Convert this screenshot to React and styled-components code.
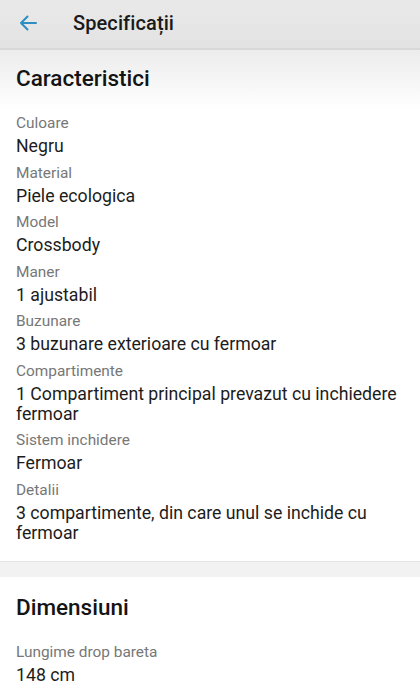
import React from "react";
import styled, { createGlobalStyle } from "styled-components";

const Global = createGlobalStyle`
  html, body { margin: 0; padding: 0; background: #ffffff; }
  body { font-family: Roboto, "Noto Sans", Arial, sans-serif; -webkit-font-smoothing: antialiased; }
  * { box-sizing: border-box; }
`;

const Page = styled.div`
  width: 420px;
  min-height: 700px;
  background: #fff;
  display: flex;
  flex-direction: column;
`;

const Header = styled.header`
  height: 50px;
  display: flex;
  align-items: center;
  background: linear-gradient(#e9e9e9, #e3e3e3);
  border-bottom: 2px solid #d8d8d8;
  padding: 0 0 2px 18px;
  gap: 35px;
`;

const BackButton = styled.button`
  border: 0;
  background: none;
  padding: 0;
  width: 20px;
  height: 20px;
  display: flex;
  align-items: center;
  justify-content: center;
  color: #2b8fc4;
`;

const Title = styled.h1`
  margin: 0;
  font-size: 20px;
  font-weight: 500;
  color: #1a1a1a;
  letter-spacing: 0.1px;
`;

const Section = styled.section`
  padding: ${(p) => (p.$first ? "14px" : "16px")} 16px 12px;
  background: ${(p) =>
    p.$first ? "linear-gradient(#ececec 0px, #ffffff 60px)" : "#ffffff"};
`;

const SectionTitle = styled.h2`
  margin: 0 0 21px;
  font-size: 22.5px;
  line-height: 28px;
  font-weight: 500;
  color: #141414;
`;

const Row = styled.div`
  display: flex;
  flex-direction: column;
  gap: 3px;
  padding-bottom: 6.5px;
`;

const Label = styled.div`
  font-size: 15.4px;
  line-height: 20px;
  color: #777777;
`;

const Value = styled.div`
  font-size: 17.7px;
  line-height: 20px;
  color: #1c1c1c;
`;

const Divider = styled.div`
  height: 16px;
  background: #f2f2f2;
  border-top: 1px solid #e4e4e4;
`;

const characteristics = [
  ["Culoare", "Negru"],
  ["Material", "Piele ecologica"],
  ["Model", "Crossbody"],
  ["Maner", "1 ajustabil"],
  ["Buzunare", "3 buzunare exterioare cu fermoar"],
  ["Compartimente", "1 Compartiment principal prevazut cu inchiedere fermoar"],
  ["Sistem inchidere", "Fermoar"],
  ["Detalii", "3 compartimente, din care unul se inchide cu fermoar"],
];

const dimensions = [["Lungime drop bareta", "148 cm"]];

function Spec({ label, value }) {
  return (
    <Row>
      <Label>{label}</Label>
      <Value>{value}</Value>
    </Row>
  );
}

export default function App() {
  return (
    <>
      <Global />
      <Page>
        <Header>
          <BackButton aria-label="Înapoi">
            <svg width="18" height="16" viewBox="0 0 18 16" fill="none">
              <path
                d="M17 8H2M8.5 1.5L2 8l6.5 6.5"
                stroke="currentColor"
                strokeWidth="2"
                strokeLinecap="round"
                strokeLinejoin="round"
              />
            </svg>
          </BackButton>
          <Title>Specificații</Title>
        </Header>
        <Section $first>
          <SectionTitle>Caracteristici</SectionTitle>
          {characteristics.map(([l, v]) => (
            <Spec key={l} label={l} value={v} />
          ))}
        </Section>
        <Divider />
        <Section>
          <SectionTitle>Dimensiuni</SectionTitle>
          {dimensions.map(([l, v]) => (
            <Spec key={l} label={l} value={v} />
          ))}
        </Section>
      </Page>
    </>
  );
}
